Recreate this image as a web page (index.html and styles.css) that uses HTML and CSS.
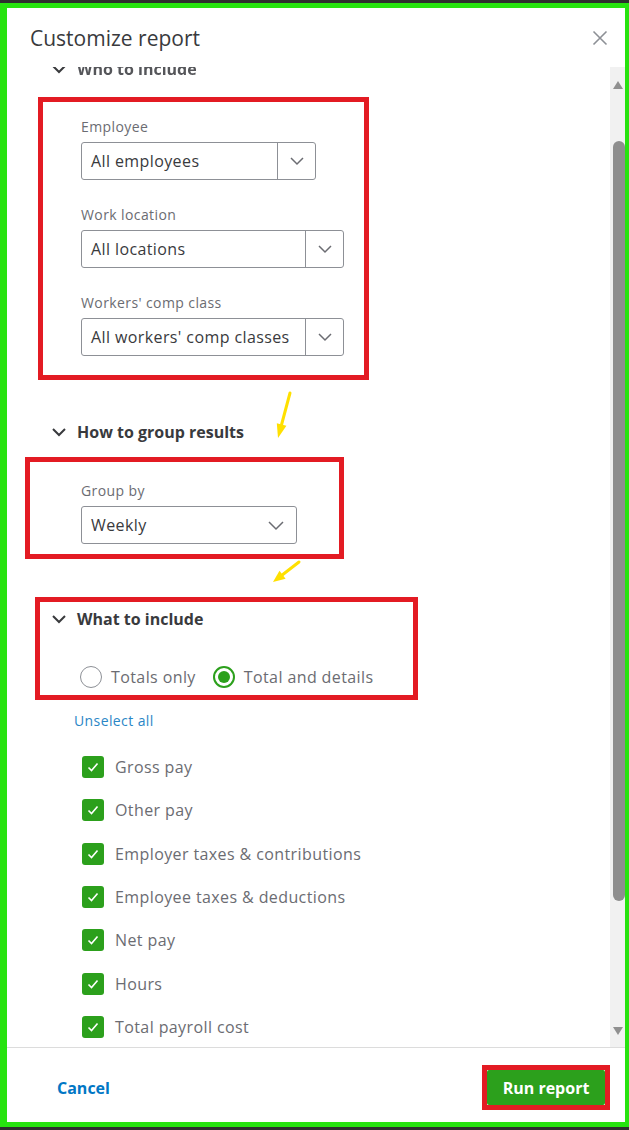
FILE: index.html
```html
<!DOCTYPE html>
<html lang="en">

<head>
    <meta charset="UTF-8">
    <meta name="viewport" content="width=device-width, initial-scale=1.0">
    <title>Customize report</title>
    <link rel="stylesheet" href="styles.css">
</head>

<body>
    <div class="frame">
        <div class="dialog">
            <div class="dialog-head">
                <h2 class="dialog-title">Customize report</h2>
                <button class="close-btn" aria-label="Close">
                    <svg width="16" height="16" viewBox="0 0 16 16"><path d="M1.5 1.5l13 13M14.5 1.5l-13 13" /></svg>
                </button>
            </div>

            <div class="dialog-body">
                <div class="scroll-area">
                    <div class="section-head section-who">
                        <svg class="chev" width="16" height="16" viewBox="0 0 16 16"><path d="M2 5l6 6 6-6" /></svg>
                        <span>Who to include</span>
                    </div>

                    <!-- red annotation boxes wrap the fields -->
                    <div class="mark mark-who">
                        <div class="field">
                            <div class="field-label">Employee</div>
                            <div class="combo combo-short">
                                <span class="combo-value">All employees</span>
                                <span class="combo-btn"><svg width="14" height="14" viewBox="0 0 14 14"><path d="M1 4l6 6 6-6" /></svg></span>
                            </div>
                        </div>
                        <div class="field">
                            <div class="field-label">Work location</div>
                            <div class="combo">
                                <span class="combo-value">All locations</span>
                                <span class="combo-btn"><svg width="14" height="14" viewBox="0 0 14 14"><path d="M1 4l6 6 6-6" /></svg></span>
                            </div>
                        </div>
                        <div class="field">
                            <div class="field-label">Workers' comp class</div>
                            <div class="combo">
                                <span class="combo-value">All workers' comp classes</span>
                                <span class="combo-btn"><svg width="14" height="14" viewBox="0 0 14 14"><path d="M1 4l6 6 6-6" /></svg></span>
                            </div>
                        </div>
                    </div>

                    <div class="section-head section-how">
                        <svg class="chev" width="16" height="16" viewBox="0 0 16 16"><path d="M2 5l6 6 6-6" /></svg>
                        <span>How to group results</span>
                    </div>

                    <div class="mark mark-group">
                        <div class="field">
                            <div class="field-label">Group by</div>
                            <div class="select">
                                <span class="combo-value">Weekly</span>
                                <svg width="16" height="16" viewBox="0 0 16 16"><path d="M1 5l7 7 7-7" /></svg>
                            </div>
                        </div>
                    </div>

                    <div class="mark mark-what">
                        <div class="section-head">
                            <svg class="chev" width="16" height="16" viewBox="0 0 16 16"><path d="M2 5l6 6 6-6" /></svg>
                            <span>What to include</span>
                        </div>
                        <div class="radio-row">
                            <label class="radio"><span class="radio-dot"></span>Totals only</label>
                            <label class="radio"><span class="radio-dot on"></span>Total and details</label>
                        </div>
                    </div>

                    <a class="unselect" href="#">Unselect all</a>

                    <ul class="check-list">
                        <li><span class="check"><svg width="14" height="14" viewBox="0 0 14 14"><path d="M2.5 7.5l3 3 6-7" /></svg></span>Gross pay</li>
                        <li><span class="check"><svg width="14" height="14" viewBox="0 0 14 14"><path d="M2.5 7.5l3 3 6-7" /></svg></span>Other pay</li>
                        <li><span class="check"><svg width="14" height="14" viewBox="0 0 14 14"><path d="M2.5 7.5l3 3 6-7" /></svg></span>Employer taxes &amp; contributions</li>
                        <li><span class="check"><svg width="14" height="14" viewBox="0 0 14 14"><path d="M2.5 7.5l3 3 6-7" /></svg></span>Employee taxes &amp; deductions</li>
                        <li><span class="check"><svg width="14" height="14" viewBox="0 0 14 14"><path d="M2.5 7.5l3 3 6-7" /></svg></span>Net pay</li>
                        <li><span class="check"><svg width="14" height="14" viewBox="0 0 14 14"><path d="M2.5 7.5l3 3 6-7" /></svg></span>Hours</li>
                        <li><span class="check"><svg width="14" height="14" viewBox="0 0 14 14"><path d="M2.5 7.5l3 3 6-7" /></svg></span>Total payroll cost</li>
                    </ul>

                    <!-- yellow annotation arrows -->
                    <svg class="arrow arrow-1" width="30" height="54" viewBox="0 0 30 54">
                        <path class="shaft" d="M21 4L12.6 35.5" />
                        <polygon points="9,49 17.4,36.8 7.8,34.2" />
                    </svg>
                    <svg class="arrow arrow-2" width="36" height="32" viewBox="0 0 36 32">
                        <path class="shaft" d="M31 6L14.5 18.7" />
                        <polygon points="5,26 17.6,22.7 11.5,14.7" />
                    </svg>
                </div>

                <div class="scrollbar">
                    <span class="sb-up"></span>
                    <span class="sb-thumb"></span>
                    <span class="sb-down"></span>
                </div>
            </div>

            <div class="dialog-foot">
                <a class="cancel" href="#">Cancel</a>
                <div class="mark mark-run">
                    <button class="run-btn">Run report</button>
                </div>
            </div>
        </div>
    </div>
</body>

</html>
```

FILE: styles.css
```css
body {
    margin: 0;
    padding: 0;
    background-color: #2e2e2e;
    font-family: 'Open Sans', 'Noto Sans', sans-serif;
    color: #393a3d;
}

.frame {
    margin-top: 3px;
    height: 1124px;
    box-sizing: border-box;
    border-style: solid;
    border-color: #27e30f;
    border-width: 5px 4px 5px 7px;
    background-color: #fff;
}

.dialog {
    display: flex;
    flex-direction: column;
    height: 100%;
}

.dialog-head {
    height: 59px;
    flex: none;
    display: flex;
    align-items: center;
    justify-content: space-between;
    padding: 0 17px 0 23px;
}

.dialog-title {
    margin: 0;
    font-size: 21px;
    font-weight: 400;
    color: #393a3d;
}

.close-btn {
    border: 0;
    background: none;
    padding: 0;
    width: 16px;
    height: 16px;
    cursor: pointer;
}

.close-btn svg {
    display: block;
    stroke: #8d9096;
    stroke-width: 1.6;
    fill: none;
}

.dialog-body {
    height: 980px;
    flex: none;
    display: flex;
}

.scroll-area {
    position: relative;
    flex: 1;
    overflow: hidden;
}

/* section headers */
.section-head {
    display: flex;
    align-items: center;
    gap: 10px;
    height: 24px;
    font-size: 16px;
    font-weight: 700;
    color: #393a3d;
}

.section-head .chev {
    stroke: #393a3d;
    stroke-width: 2;
    fill: none;
}

.section-who {
    margin: -10px 0 0 44px;
    color: #55565a;
    filter: blur(0.5px);
}

.section-how {
    margin: 40px 0 0 44px;
}

/* red annotation boxes */
.mark {
    border: 5px solid #e31b23;
    box-sizing: border-box;
}

.mark-who {
    width: 331px;
    margin: 16px 0 0 31px;
    padding: 16px 0 19px 38px;
}

.mark-group {
    width: 319px;
    margin: 13px 0 0 18px;
    padding: 20px 0 10px 51px;
}

.mark-what {
    width: 383px;
    margin: 38px 0 0 28px;
    padding: 5px 0 7px 11px;
}

/* fields */
.field + .field {
    margin-top: 26px;
}

.field-label {
    font-size: 14px;
    line-height: 18px;
    letter-spacing: 0.4px;
    color: #6b6c72;
    margin-bottom: 6px;
}

.combo {
    display: flex;
    width: 263px;
    height: 38px;
    box-sizing: border-box;
    border: 1px solid #8d9096;
    border-radius: 3px;
}

.combo-short {
    width: 235px;
}

.combo-value {
    flex: 1;
    padding-left: 9px;
    font-size: 16px;
    line-height: 36px;
    letter-spacing: 0.4px;
    color: #393a3d;
    white-space: nowrap;
}

.combo-btn {
    width: 37px;
    border-left: 1px solid #8d9096;
    display: flex;
    align-items: center;
    justify-content: center;
}

.combo-btn svg,
.select svg {
    stroke: #6b6c72;
    stroke-width: 1.5;
    fill: none;
}

.select {
    display: flex;
    align-items: center;
    width: 216px;
    height: 38px;
    box-sizing: border-box;
    border: 1px solid #8d9096;
    border-radius: 3px;
    padding-right: 12px;
}

/* radios */
.radio-row {
    display: flex;
    gap: 17px;
    margin: 35px 0 0 29px;
}

.radio {
    display: flex;
    align-items: center;
    gap: 9px;
    font-size: 16px;
    line-height: 22px;
    letter-spacing: 0.4px;
    color: #6b6c72;
}

.radio-dot {
    width: 22px;
    height: 22px;
    box-sizing: border-box;
    border: 1px solid #8d9096;
    border-radius: 50%;
    display: flex;
    align-items: center;
    justify-content: center;
}

.radio-dot.on {
    border: 2px solid #2ca01c;
}

.radio-dot.on::after {
    content: "";
    width: 12px;
    height: 12px;
    border-radius: 50%;
    background-color: #2ca01c;
}

.unselect {
    display: block;
    width: max-content;
    margin: 12px 0 0 67px;
    font-size: 14px;
    line-height: 18px;
    letter-spacing: 0.4px;
    color: #2a86c6;
    text-decoration: none;
}

/* checkboxes */
.check-list {
    list-style: none;
    margin: 26px 0 0 75px;
    padding: 0;
    display: flex;
    flex-direction: column;
    gap: 21.33px;
}

.check-list li {
    display: flex;
    align-items: center;
    gap: 11px;
    height: 22px;
    font-size: 16px;
    letter-spacing: 0.4px;
    color: #6b6c72;
}

.check {
    width: 22px;
    height: 22px;
    border-radius: 3px;
    background-color: #2ca01c;
    display: flex;
    align-items: center;
    justify-content: center;
}

.check svg {
    stroke: #fff;
    stroke-width: 1.6;
    fill: none;
}

/* yellow arrows */
.arrow {
    position: absolute;
}

.arrow .shaft {
    stroke: #ffe000;
    stroke-width: 3;
    stroke-linecap: round;
    fill: none;
}

.arrow polygon {
    fill: #ffe000;
}

.arrow-1 {
    left: 262px;
    top: 322px;
}

.arrow-2 {
    left: 261px;
    top: 489px;
}

/* scrollbar */
.scrollbar {
    width: 15px;
    flex: none;
    background-color: #f1f1f1;
    display: flex;
    flex-direction: column;
    align-items: center;
}

.sb-up,
.sb-down {
    width: 0;
    height: 0;
    border-left: 5px solid transparent;
    border-right: 5px solid transparent;
}

.sb-up {
    margin-top: 14px;
    border-bottom: 8px solid #909090;
}

.sb-thumb {
    width: 12px;
    height: 760px;
    margin: 52px 0 0 3px;
    border-radius: 6px;
    background-color: #8e8e8e;
}

.sb-down {
    margin-top: auto;
    margin-bottom: 12px;
    border-top: 8px solid #909090;
}

/* footer */
.dialog-foot {
    flex: 1;
    border-top: 1px solid #dcdcdc;
    display: flex;
    align-items: center;
    justify-content: space-between;
    padding: 5px 15px 0 50px;
}

.cancel {
    font-size: 16px;
    font-weight: 700;
    color: #0077c5;
    text-decoration: none;
}

.mark-run {
    display: flex;
}

.run-btn {
    width: 118px;
    height: 35px;
    border: 0;
    border-radius: 2px;
    background-color: #2ca01c;
    color: #fff;
    font-family: inherit;
    font-size: 16px;
    font-weight: 700;
    cursor: pointer;
}
```
